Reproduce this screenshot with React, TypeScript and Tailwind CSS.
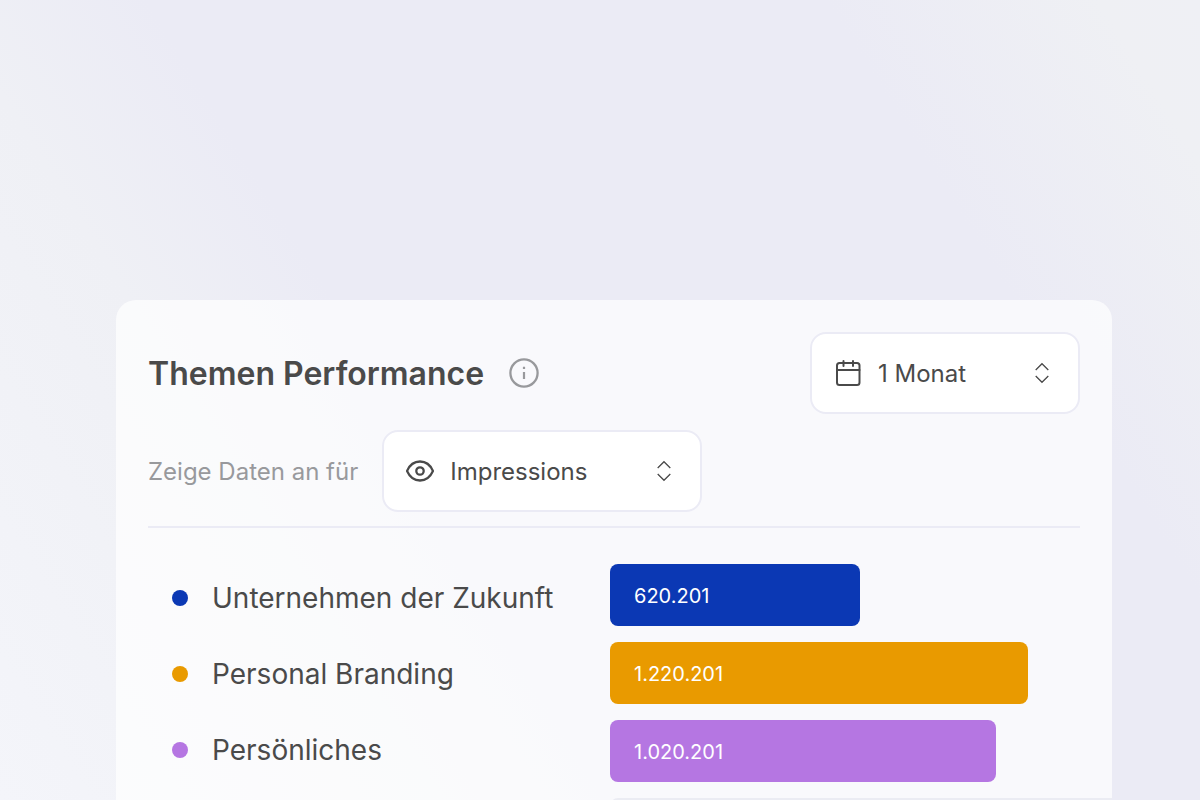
import type { ReactNode } from "react";

const topics = [
    { name: "Unternehmen der Zukunft", value: "620.201", share: 49.8, color: "bg-[#0b38b4]" },
    { name: "Personal Branding", value: "1.220.201", share: 83.3, color: "bg-[#e99a00]" },
    { name: "Persönliches", value: "1.020.201", share: 76.9, color: "bg-[#b576e2]" },
];

function InfoIcon() {
    return (
        <svg width="32" height="32" viewBox="0 0 32 32" fill="none" stroke="currentColor" aria-hidden="true">
            <circle cx="16" cy="16" r="13.6" strokeWidth="2.3" />
            <path d="M16 15v7" strokeWidth="2.2" />
            <path d="M16 9.7v2.2" strokeWidth="2.2" />
        </svg>
    );
}

function CalendarIcon() {
    return (
        <svg width="28" height="28" viewBox="0 0 28 28" fill="none" stroke="currentColor" strokeWidth="2" strokeLinecap="round" aria-hidden="true">
            <rect x="3" y="4" width="22.5" height="22" rx="2.5" />
            <path d="M3 11h22.500" />
            <path d="M9.500 2v5M19 2v5" />
        </svg>
    );
}

function EyeIcon() {
    return (
        <svg width="28" height="32" viewBox="2 0 28 32" fill="none" stroke="currentColor" strokeWidth="2.3" aria-hidden="true">
            <path d="M3 16C5.500 10.300 10.300 6.500 16 6.500S26.500 10.300 29 16C26.500 21.700 21.700 25.500 16 25.500S5.500 21.700 3 16Z" strokeLinejoin="round" />
            <circle cx="16" cy="16" r="3.700" />
        </svg>
    );
}

function SortIcon() {
    return (
        <svg width="16" height="24" viewBox="0 0 16 24" fill="none" stroke="currentColor" strokeWidth="1.3" aria-hidden="true">
            <path d="M1.700 9L8 2.700L14.300 9" />
            <path d="M1.700 15L8 21.300L14.300 15" />
        </svg>
    );
}

type PickerProps = {
    id: string;
    label?: string;
    icon: ReactNode;
    options: string[];
    className: string;
};

function Picker({ id, label, icon, options, className }: PickerProps) {
    return (
        <div className="relative text-[#4a4a4a]">
            <span className="pointer-events-none absolute inset-y-0 left-6 flex items-center">
                {icon}
            </span>
            <select
                id={id}
                aria-label={label}
                className={`h-[82px] appearance-none rounded-2xl border-2 border-[#ebebf5] bg-white pr-14 pt-0.5 text-2xl ${className}`}
            >
                {options.map((option) => (
                    <option key={option}>{option}</option>
                ))}
            </select>
            <span className="pointer-events-none absolute inset-y-0 right-[30px] flex items-center">
                <SortIcon />
            </span>
        </div>
    );
}

export default function App() {
    return (
        <main className="flex h-screen overflow-hidden bg-[linear-gradient(58deg,#f4f5fa_0%,#eff0f5_26%,#ebebf5_38%,#ebebf5_78%,#eff0f4_94%,#eff0f5_100%)] pl-[116px] pr-[88px] pt-[300px] font-['Inter',sans-serif] text-[#4a4a4a]">
            <section className="h-max min-h-full flex-1 overflow-hidden rounded-t-[20px] bg-white/70 pl-8 pt-8">

                {/* Header */}
                <div className="mr-8 border-b-2 border-[#ebebf5] pb-3.5">
                    <div className="flex items-center justify-between">
                        <div className="flex items-center gap-6">
                            <h1 className="pt-0.5 text-[32px] font-semibold leading-10">
                                Themen Performance
                            </h1>
                            <button type="button" aria-label="Info" className="text-[#98999c]">
                                <InfoIcon />
                            </button>
                        </div>
                        <Picker
                            id="period"
                            label="Zeitraum"
                            icon={<CalendarIcon />}
                            options={["1 Monat"]}
                            className="w-[270px] pl-[66px]"
                        />
                    </div>

                    <div className="mt-4 flex items-center gap-6">
                        <label htmlFor="metric" className="pt-0.5 text-2xl text-[#98999c]">
                            Zeige Daten an für
                        </label>
                        <Picker
                            id="metric"
                            icon={<EyeIcon />}
                            options={["Impressions"]}
                            className="w-80 pl-[66px]"
                        />
                    </div>
                </div>

                {/* Chart */}
                <div className="grid grid-cols-[462px_1fr] pt-9">
                    <ul className="pl-6">
                        {topics.map((topic) => (
                            <li key={topic.name} className="flex h-[76px] items-center gap-6 pb-2 text-[28px]">
                                <span className={`size-4 rounded-full ${topic.color}`} />
                                {topic.name}
                            </li>
                        ))}
                    </ul>

                    <div className="flex flex-col gap-4">
                        {topics.map((topic) => (
                            <div
                                key={topic.name}
                                className={`flex h-[62px] items-center rounded-lg px-6 pt-0.5 text-xl text-white ${topic.color}`}
                                style={{ width: `${topic.share}%` }}
                            >
                                {topic.value}
                            </div>
                        ))}
                        <div className="h-[62px] rounded-l-lg bg-[#ebecf3]" />
                    </div>
                </div>

            </section>
        </main>
    );
}
